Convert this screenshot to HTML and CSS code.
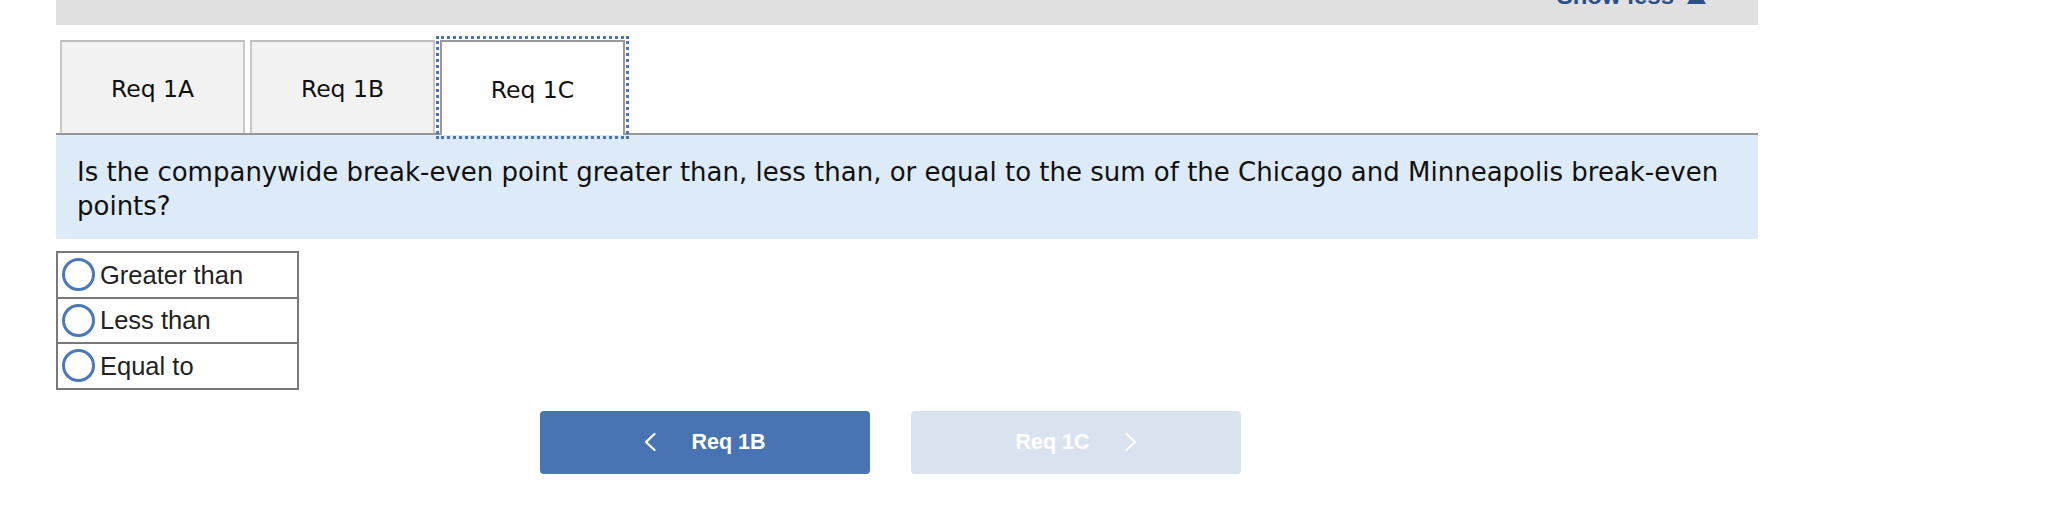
FILE: index.html
```html
<!DOCTYPE html>
<html>
<head>
<meta charset="utf-8">
<link rel="stylesheet" href="styles.css">
</head>
<body>
<div class="wrap">
  <div class="topbar">
    <div class="showless">
      <span class="showless-text">Show less</span>
      <svg class="tri" width="19" height="16" viewBox="0 0 19 16"><polygon points="9.5,0 19,16 0,16" fill="#2c4e8b"/></svg>
    </div>
  </div>

  <div class="tabs">
    <div class="tab">Req 1A</div>
    <div class="tab">Req 1B</div>
    <div class="tab active">Req 1C</div>
  </div>

  <div class="question">Is the companywide break-even point greater than, less than, or equal to the sum of the Chicago and Minneapolis break-even points?</div>

  <table class="choices">
    <tr><td><span class="radio"></span><span class="label">Greater than</span></td></tr>
    <tr><td><span class="radio"></span><span class="label">Less than</span></td></tr>
    <tr><td><span class="radio"></span><span class="label">Equal to</span></td></tr>
  </table>

  <div class="navs">
    <div class="navbtn prev">
      <svg width="12" height="18" viewBox="0 0 12 18"><polyline points="10.5,1 2,9 10.5,17" fill="none" stroke="#ffffff" stroke-width="2.2" stroke-linecap="round" stroke-linejoin="round"/></svg>
      <span>Req 1B</span>
    </div>
    <div class="navbtn next">
      <span>Req 1C</span>
      <svg width="12" height="18" viewBox="0 0 12 18"><polyline points="1.5,1 10,9 1.5,17" fill="none" stroke="#ffffff" stroke-width="2.2" stroke-linecap="round" stroke-linejoin="round"/></svg>
    </div>
  </div>
</div>
</body>
</html>
```

FILE: styles.css
```css
html, body {
  margin: 0;
  padding: 0;
  background: #ffffff;
}
body {
  overflow: hidden;
}
.wrap {
  margin-left: 56px;
  width: 1702px;
}
.topbar {
  height: 25px;
  background: #e0e0e0;
  overflow: hidden;
  display: flex;
  justify-content: flex-end;
  align-items: flex-start;
  padding-right: 52px;
  box-sizing: border-box;
}
.showless {
  display: flex;
  align-items: flex-start;
  gap: 13px;
  margin-top: -18px;
}
.showless-text {
  font-family: "Liberation Sans", Arial, sans-serif;
  font-weight: bold;
  font-size: 24px;
  line-height: 28px;
  color: #2c4e8b;
}
.tri {
  display: block;
  margin-top: 6px;
}
.tabs {
  display: flex;
  gap: 5px;
  padding-left: 4px;
  margin-top: 15px;
  height: 93px;
  border-bottom: 2px solid #979797;
}
.tab {
  width: 185px;
  height: 93px;
  box-sizing: border-box;
  background: #f2f2f2;
  border: 2px solid #c8c8c8;
  border-top-color: #bdbdbd;
  border-bottom: none;
  display: flex;
  align-items: center;
  justify-content: center;
  font-family: "DejaVu Sans", Verdana, sans-serif;
  font-size: 23.5px;
  color: #111111;
  padding-top: 3px;
}
.tab.active {
  background: #ffffff;
  border-color: #999999;
  outline: 3px dotted #4a74b9;
  outline-offset: 1px;
  height: 95px;
  position: relative;
  z-index: 1;
}
.question {
  background: #ddeaf7;
  font-family: "DejaVu Sans", Verdana, sans-serif;
  font-size: 26px;
  line-height: 34px;
  color: #111111;
  padding: 20px 24px 16px 21px;
}
.choices {
  border-collapse: collapse;
  margin-top: 12px;
  width: 243px;
}
.choices td {
  border: 2px solid #787878;
  border-top-width: 0;
  padding: 0 0 0 4px;
  box-sizing: border-box;
  font-family: "Liberation Sans", Arial, sans-serif;
  font-size: 25.5px;
  color: #222222;
  white-space: nowrap;
  display: flex;
  align-items: center;
  height: 45.5px;
}
.choices tr:first-child td {
  border-top-width: 2px;
  height: 47.5px;
}
.radio {
  display: inline-block;
  width: 33px;
  height: 33px;
  box-sizing: border-box;
  border: 3.6px solid #4a78b8;
  border-radius: 50%;
  margin-right: 5px;
  flex: none;
}
.label {
  line-height: 30px;
}
.navs {
  display: flex;
  gap: 41px;
  padding-left: 484px;
  margin-top: 21px;
}
.navbtn {
  width: 330px;
  height: 63px;
  border-radius: 4px;
  display: flex;
  align-items: center;
  justify-content: center;
  gap: 35px;
  font-family: "Liberation Sans", Arial, sans-serif;
  font-weight: bold;
  font-size: 21.5px;
  color: #ffffff;
}
.navbtn svg {
  display: block;
}
.navbtn.prev {
  background: #4874b3;
}
.navbtn.next {
  background: #d9e3ef;
}
```
